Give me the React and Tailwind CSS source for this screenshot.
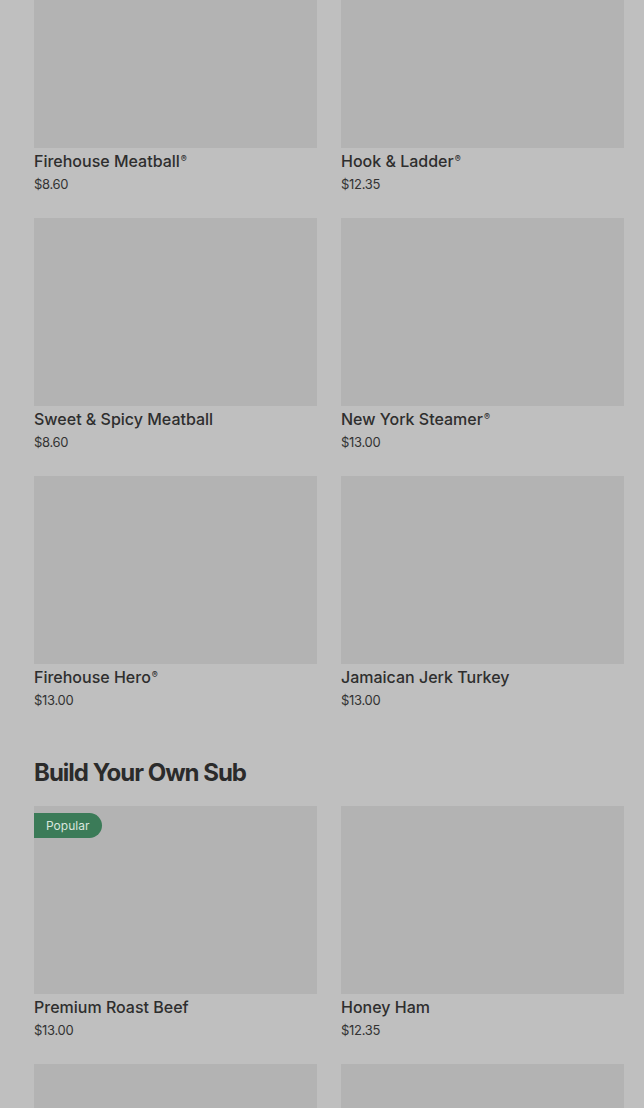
import React from 'react';

const topItems = [
  { name: 'Firehouse Meatball', reg: true, price: '$8.60' },
  { name: 'Hook & Ladder', reg: true, price: '$12.35' },
  { name: 'Sweet & Spicy Meatball', price: '$8.60' },
  { name: 'New York Steamer', reg: true, price: '$13.00' },
  { name: 'Firehouse Hero', reg: true, price: '$13.00' },
  { name: 'Jamaican Jerk Turkey', price: '$13.00' },
];

const buildItems = [
  { name: 'Premium Roast Beef', price: '$13.00', popular: true },
  { name: 'Honey Ham', price: '$12.35' },
  { name: '', price: '' },
  { name: '', price: '' },
];

const ItemCard = ({ item }) => (
  <div className="flex flex-col">
    <div className="relative h-[188px] bg-[#b3b3b3]">
      {item.popular && (
        <span className="absolute left-0 top-[7px] h-[25px] pl-3 pr-[13px] flex items-center rounded-r-full bg-[#3b7b58] text-[12px] text-[#d9e6de]">
          Popular
        </span>
      )}
    </div>
    <p className="mt-[3px] text-[16px] leading-5 font-medium text-[#2e2e2e]">
      {item.name}
      {item.reg && <sup className="text-[9px] ml-[1px] top-[-0.6em]">®</sup>}
    </p>
    <p className="mt-1 text-[13px] leading-[18px] tracking-[-0.3px] text-[#333]">{item.price}</p>
  </div>
);

export default function App() {
  return (
    <div className="min-h-[1108px] bg-[#bfbfbf] overflow-hidden" style={{ fontFamily: 'Inter, "Noto Sans", sans-serif' }}>
      <div className="pl-[34px] pr-[20px] -mt-10">
        <div className="grid grid-cols-2 gap-x-6 gap-y-[25px]">
          {topItems.map((item) => (
            <ItemCard key={item.name} item={item} />
          ))}
        </div>
        <h2 className="mt-[48px] text-[24px] leading-8 font-bold tracking-[-1px] text-[#2b2b2b]">Build Your Own Sub</h2>
        <div className="mt-[17px] grid grid-cols-2 gap-x-6 gap-y-[25px]">
          {buildItems.map((item, i) => (
            <ItemCard key={i} item={item} />
          ))}
        </div>
      </div>
    </div>
  );
}
